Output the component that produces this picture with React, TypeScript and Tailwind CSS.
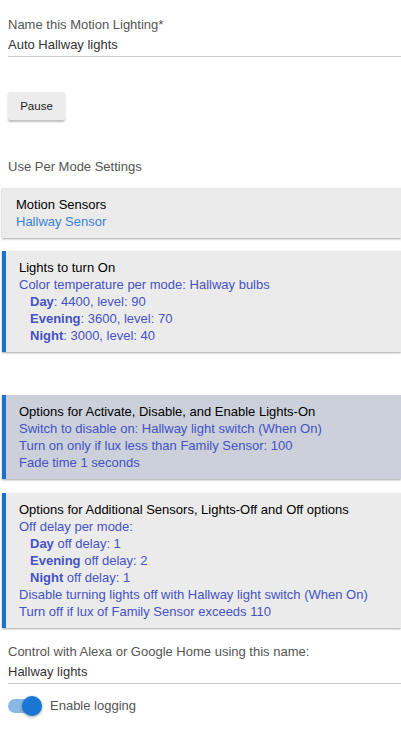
export default function App() {
  const sub = 'text-[#4652c4]'

  return (
    <div
      className="min-h-screen bg-white text-[13px] leading-[17px] overflow-hidden"
      style={{ fontFamily: '"Liberation Sans", Arial, sans-serif' }}
    >
      {/* Name field */}
      <div className="pl-2 pt-[15px]">
        <div className="text-[#555] leading-[20px]">Name this Motion Lighting*</div>
        <div className="text-[#333] leading-[20px] pb-[1px] border-b border-[#ccc]">Auto Hallway lights</div>
      </div>

      {/* Pause */}
      <div className="pl-2 pt-[35px]">
        <button className="w-[57px] h-[28px] bg-[#ececec] text-[#222] text-[11.5px] rounded-[2px] shadow-[0_2px_2px_rgba(0,0,0,0.25)]">
          Pause
        </button>
      </div>

      <div className="pl-2 pt-[37px] text-[#555] leading-[20px]">Use Per Mode Settings</div>

      <div className="pl-[2px] pt-[11px]">
        {/* Motion Sensors */}
        <div className="bg-[#ebebeb] px-[14px] py-[8px] shadow-[0_1px_2px_rgba(0,0,0,0.35)]">
          <div className="text-black">Motion Sensors</div>
          <div className="text-[#3a82d6]">Hallway Sensor</div>
        </div>

        {/* Lights to turn On */}
        <div className="mt-[13px] bg-[#ebebeb] border-l-4 border-[#1a73c8] pl-[13px] py-[8px] shadow-[0_1px_2px_rgba(0,0,0,0.35)]">
          <div className="text-black">Lights to turn On</div>
          <div className={sub}>Color temperature per mode: Hallway bulbs</div>
          <div className={`${sub} pl-[11px]`}><b>Day</b>: 4400, level: 90</div>
          <div className={`${sub} pl-[11px]`}><b>Evening</b>: 3600, level: 70</div>
          <div className={`${sub} pl-[11px]`}><b>Night</b>: 3000, level: 40</div>
        </div>

        {/* Activate options */}
        <div className="mt-[43px] bg-[#cbd0db] border-l-4 border-[#1a73c8] pl-[13px] py-[8px] shadow-[0_1px_2px_rgba(0,0,0,0.35)]">
          <div className="text-black">Options for Activate, Disable, and Enable Lights-On</div>
          <div className={sub}>Switch to disable on: Hallway light switch (When On)</div>
          <div className={sub}>Turn on only if lux less than Family Sensor: 100</div>
          <div className={sub}>Fade time 1 seconds</div>
        </div>

        {/* Additional options */}
        <div className="mt-[14px] bg-[#ebebeb] border-l-4 border-[#1a73c8] pl-[13px] py-[8px] shadow-[0_1px_2px_rgba(0,0,0,0.35)]">
          <div className="text-black">Options for Additional Sensors, Lights-Off and Off options</div>
          <div className={sub}>Off delay per mode:</div>
          <div className={`${sub} pl-[11px]`}><b>Day</b> off delay: 1</div>
          <div className={`${sub} pl-[11px]`}><b>Evening</b> off delay: 2</div>
          <div className={`${sub} pl-[11px]`}><b>Night</b> off delay: 1</div>
          <div className={sub}>Disable turning lights off with Hallway light switch (When On)</div>
          <div className={sub}>Turn off if lux of Family Sensor exceeds 110</div>
        </div>
      </div>

      {/* Alexa name */}
      <div className="pl-2 pt-[14px]">
        <div className="text-[#555] leading-[20px]">Control with Alexa or Google Home using this name:</div>
        <div className="text-[#333] leading-[20px] pb-[1px] border-b border-[#ccc]">Hallway lights</div>
      </div>

      {/* Logging toggle */}
      <div className="pl-2 pt-[12px] flex items-center gap-[14px]">
        <div className="relative w-[28px] h-[14px] rounded-full bg-[#8ab8e6]">
          <div className="absolute right-[-6px] top-[-3px] w-[20px] h-[20px] rounded-full bg-[#1976d2] shadow-[0_1px_3px_rgba(0,0,0,0.4)]" />
        </div>
        <span className="text-[#555] leading-[20px]">Enable logging</span>
      </div>
    </div>
  )
}
